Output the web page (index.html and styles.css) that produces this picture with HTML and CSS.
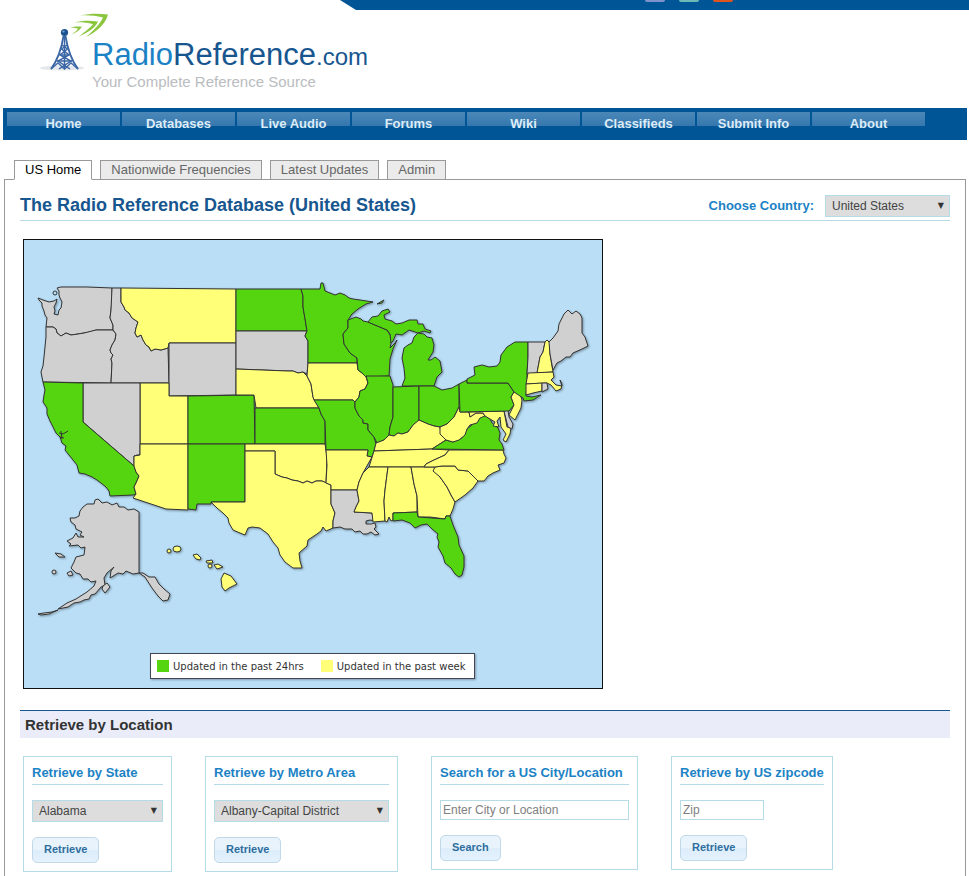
FILE: index.html
```
<!DOCTYPE html>
<html lang="en">
<head>
    <meta charset="UTF-8">
    <meta name="viewport" content="width=device-width, initial-scale=1.0">
    <title>The Radio Reference Database (United States)</title>
    <link rel="stylesheet" href="styles.css">
</head>
<body>
    <header>
        <div class="topbar">
            <span class="social facebook"></span>
            <span class="social twitter"></span>
            <span class="social rss"></span>
        </div>
        <a class="logo" href="#">
            <svg class="tower" width="70" height="60" viewBox="40 12 70 60" aria-hidden="true">
                <ellipse cx="62" cy="68" rx="22" ry="2.500" fill="#d9dde2" opacity=".7"/>
                <g fill="none" stroke="#3b66a5" stroke-width="1.800">
                    <path d="M63.500 36C61 52 57 61 51 69M65.500 36C68 52 72 61 78 69"/>
                    <path d="M64.500 36V69M62 45L67.500 49L60 55L71 61L59 69M67 45L61.500 49L69 55L58 61L70 69" stroke-width="1.500"/>
                    <path d="M60 55H69M57 61H72M51 69L58 63L64.500 69L71 63L78 69" stroke-width="1.400"/>
                </g>
                <circle cx="64.500" cy="32.500" r="3.600" fill="#1d5291"/>
                <circle cx="63.500" cy="31.500" r="1.100" fill="#78a4d0"/>
                <g fill="#8cc63f">
                    <path d="M80 15.500C90 13.500 99 13.500 108 14.500C106 23 98 31 86 37C94 30 100 24 103 17.500C95 15.500 88 15 80 15.500Z"/>
                    <path d="M74 22.500C82 20.500 90 20.500 98 21.500C96 27 89 32 79 36.500C86 31 91 27 93 24.300C87 22.500 80 22 74 22.500Z"/>
                    <path d="M70 27.800C75 26.300 78 26.300 82 26.800C80 30 76 33 71.500 34.500C75 32 77.500 30 78 28.700C75 27.800 73 27.600 70 27.800Z"/>
                </g>
            </svg>
            <span class="logo-text">
                <span class="brand"><span class="radio">Radio</span><span class="reference">Reference</span><span class="com">.com</span></span>
                <span class="tagline">Your Complete Reference Source</span>
            </span>
        </a>
    </header>

    <nav class="menu">
        <a href="#">Home</a>
        <a href="#">Databases</a>
        <a href="#">Live Audio</a>
        <a href="#">Forums</a>
        <a href="#">Wiki</a>
        <a href="#">Classifieds</a>
        <a href="#">Submit Info</a>
        <a href="#">About</a>
    </nav>

    <div class="tabs">
        <a class="tab active" href="#">US Home</a>
        <a class="tab" href="#">Nationwide Frequencies</a>
        <a class="tab" href="#">Latest Updates</a>
        <a class="tab" href="#">Admin</a>
    </div>

    <main class="panel">
        <div class="title-row">
            <h1>The Radio Reference Database (United States)</h1>
            <form class="country">
                <label for="country">Choose Country:</label>
                <span class="select country-select">
                    <select id="country"><option>United States</option></select>
                </span>
            </form>
        </div>

        <div class="map">
            <svg viewBox="24 240 578 448" role="img" aria-label="Map of US states by last update">
                <g class="states">
                    <!-- West -->
                    <path class="none" d="M57 288L61 287L87 287L112 288L112 300L111 310L110 318L113 325L113 330L96 330L90 332L84 333L78 334L71 335L66 333L61 336L57 333L56 329L53 327L46 327L47 318L45 315L44 311L42 306L42 303L39 300L38 298L43 300L49 302L54 301L57 299L56 303L54 307L55 311L54 314L58 315L59 310L61 308L62 302L60 298L59 295L59 291Z"/>
                    <path class="none" d="M46 327L53 327L56 329L57 333L61 336L66 333L71 335L78 334L84 333L96 330L113 330L116 334L115 340L112 345L110 350L111 353L113 355L111 359L112 363L111 383L43 382L41 372L43 366L44 357L46 337Z"/>
                    <path class="none" d="M112 288L121 288L121 302L124 307L125 310L129 313L132 318L138 322L136 328L135 333L137 337L141 335L143 340L146 345L149 347L151 351L155 349L161 350L168 348L169 383L111 383L112 363L111 359L113 355L111 353L110 350L112 345L115 340L116 334L113 330L113 325L110 318L111 310Z"/>
                    <path class="week" d="M121 288L236 289L236 343L169 343L168 348L161 350L155 349L151 351L149 347L146 345L143 340L141 335L137 337L135 333L136 328L138 322L132 318L129 313L125 310L124 307L121 302Z"/>
                    <path class="none" d="M169 343L236 343L236 395L169 396Z"/>
                    <path class="week" d="M140 383L169 383L169 396L188 396L188 444L140 444Z"/>
                    <path class="none" d="M83 383L140 383L140 455L137 455L134 456L134 466L83 422Z"/>
                    <path class="day" d="M43 382L83 383L83 422L134 466L136 472L139 476L136 483L134 487L136 494L133 495L110 496L109 491L106 487L101 483L97 480L92 477L85 474L79 473L77 465L73 460L69 455L65 450L66 446L62 443L60 437L56 433L53 427L50 421L47 414L47 408L43 402L44 395L45 390Z"/>
                    <path d="M59 433L63 434L68 431M61 431L62 439M60 437L64 438" fill="none"/>
                    <path class="week" d="M140 444L188 444L188 510L166 509L133 498L136 494L134 487L136 483L139 476L136 472L134 466L134 456L140 455Z"/>
                    <path class="day" d="M188 396L254 395L255 444L188 444Z"/>
                    <path class="day" d="M188 444L245 444L245 502L211 502L211 504L197 504L196 510L188 509Z"/>

                    <!-- Plains -->
                    <path class="day" d="M236 289L301 289L303 296L303 307L305 318L307 331L236 331Z"/>
                    <path class="none" d="M236 331L307 331L305 336L308 341L308 363L307 374L303 372L298 373L293 371L288 371L236 369Z"/>
                    <path class="week" d="M236 369L288 371L293 371L298 373L303 372L307 376L311 384L313 397L319 408L256 408L254 395L236 395Z"/>
                    <path class="day" d="M255 408L319 408L321 414L325 421L325 444L255 444Z"/>
                    <path class="week" d="M245 444L325 444L327 457L326 483L322 481L316 481L312 483L307 481L303 483L298 481L292 480L287 478L282 477L275 474L275 451L245 451Z"/>
                    <path class="week" d="M245 451L275 451L275 474L282 477L287 478L292 480L298 481L303 483L307 481L312 483L316 481L322 481L331 485L331 504L335 513L333 521L333 528L326 531L323 527L321 531L317 534L308 540L307 546L299 553L300 561L302 568L293 568L285 562L280 555L278 548L273 542L268 534L264 531L260 528L252 527L248 528L245 535L240 533L233 530L229 523L228 518L223 513L217 508L211 502L245 502Z"/>
                    <path class="day" d="M301 289L320 289L321 283L323 283L325 291L330 293L335 295L340 293L345 295L349 298L353 299L360 300L373 302L366 304L358 309L352 314L348 320L348 328L343 334L344 344L350 353L357 358L357 363L308 363L308 341L305 336L307 331L303 307L303 296Z"/>
                    <path class="week" d="M308 363L357 363L358 370L362 373L366 377L368 383L365 389L360 391L359 397L355 402L353 400L314 400L313 397L311 384L307 376Z"/>
                    <path class="day" d="M314 400L353 400L355 402L355 408L359 416L363 420L363 423L368 424L368 430L374 437L376 444L374 451L372 457L367 456L368 450L326 450L325 421L321 414L319 408Z"/>
                    <path class="week" d="M326 450L368 450L367 456L372 457L368 464L363 473L359 482L357 490L331 490L331 485L326 483L327 465Z"/>
                    <path class="none" d="M331 490L357 490L359 501L356 507L354 512L372 513L373 518L375 521L370 520L366 521L366 524L371 524L375 523L376 527L374 529L379 534L375 535L371 532L367 534L363 534L360 531L355 532L352 529L345 529L340 527L333 528L333 521L335 513L331 504Z"/>

                    <!-- Great Lakes -->
                    <path class="day" d="M348 320L356 317L361 319L363 321L368 322L375 325L387 330L392 338L390 348L395 343L397 340L393 349L390 359L389 376L366 377L362 373L358 370L357 358L350 353L344 344L343 334L348 328Z"/>
                    <path class="day" d="M368 322L372 317L378 316L382 311L388 309L390 312L384 315L385 319L392 321L396 324L402 323L409 320L417 320L418 324L423 324L425 329L431 331L430 333L424 331L418 333L409 330L402 335L396 334L393 341L391 343L390 334L387 330L375 325Z"/>
                    <path class="day" d="M377 304L384 300L382 303Z"/>
                    <path class="day" d="M402 386L405 378L404 368L402 358L404 348L408 345L412 343L414 337L418 333L424 334L427 337L432 338L434 345L433 352L428 360L431 360L435 357L440 361L442 372L437 377L434 386Z"/>
                    <path class="day" d="M366 376L390 376L393 385L393 417L390 427L389 435L384 440L377 443L374 437L368 430L368 424L363 423L363 420L359 416L355 408L355 402L359 397L360 391L365 389L368 383Z"/>
                    <path class="day" d="M393 387L419 386L419 421L413 425L408 432L402 434L398 433L394 436L389 435L390 427L393 417Z"/>
                    <path class="day" d="M419 386L434 386L442 390L452 388L459 384L459 407L454 417L447 424L440 427L434 426L428 424L419 420Z"/>

                    <!-- South -->
                    <path class="week" d="M374 451L376 443L384 440L389 435L394 436L398 433L402 434L408 432L413 425L419 420L428 424L434 426L440 427L441 434L446 440L432 449Z"/>
                    <path class="week" d="M374 451L432 449L449 450L445 455L434 460L426 464L424 467L369 467Z"/>
                    <path class="week" d="M369 467L388 467L385 490L384 501L385 521L373 522L372 513L354 512L356 507L359 501L357 490L359 482L363 473Z"/>
                    <path class="week" d="M388 467L411 467L414 484L417 496L417 512L393 513L393 520L391 521L389 517L387 522L385 521L384 501L385 490Z"/>
                    <path class="week" d="M411 467L435 467L434 471L440 477L447 487L451 495L455 502L453 509L450 516L446 516L445 519L430 517L418 517L417 496L414 484Z"/>
                    <path class="day" d="M393 513L417 512L418 517L445 519L446 516L450 516L453 525L458 537L459 545L464 556L464 567L462 575L459 577L455 574L451 568L445 563L443 556L438 547L439 542L437 537L438 534L432 529L427 524L421 525L415 528L410 523L402 520L393 521Z"/>
                    <path class="week" d="M435 467L442 466L455 466L458 470L468 471L478 481L473 488L465 495L455 502L451 495L447 487L440 477L433 471Z"/>
                    <path class="week" d="M449 450L503 450L504 454L506 458L504 463L498 465L500 470L493 473L488 476L484 481L478 481L468 471L458 470L455 466L442 466L435 467L424 467L426 464L434 460L445 455Z"/>
                    <path class="day" d="M432 449L446 440L453 442L462 438L467 429L473 424L478 419L483 414L490 419L492 423L498 428L500 433L499 440L502 444L504 450Z"/>
                    <path class="week" d="M459 407L460 412L469 412L470 417L476 413L483 413L485 416L480 418L477 423L470 425L467 429L465 435L459 440L453 442L446 440L440 434L440 427L447 424L454 417Z"/>

                    <!-- Northeast -->
                    <path class="week" d="M469 412L504 411L507 427L511 428L510 434L506 442L503 440L506 434L501 427L500 417L497 421L499 427L493 426L495 422L490 419L485 416L483 413L476 413L470 417Z"/>
                    <path class="none" d="M504 411L508 410L509 417L513 424L512 429L508 427Z"/>
                    <path class="day" d="M459 384L467 380L467 383L508 383L514 392L511 397L514 405L509 411L460 412Z"/>
                    <path class="week" d="M514 392L520 394L522 400L521 408L518 414L515 420L509 415L514 405L511 397Z"/>
                    <path class="day" d="M467 383L467 379L475 375L474 367L482 365L489 367L497 366L500 362L501 355L507 347L515 342L528 342L528 357L527 373L527 383L526 396L532 397L541 395L533 400L524 401L523 398L514 392L508 383Z"/>
                    <path class="none" d="M528 342L545 342L543 352L540 357L537 373L527 374L528 357Z"/>
                    <path class="week" d="M545 342L547 340L550 343L550 354L552 366L553 372L537 373L540 357L543 352Z"/>
                    <path class="none" d="M549 342L553 338L558 331L559 324L564 314L568 310L572 314L576 311L580 314L582 318L582 333L585 337L588 346L582 349L573 353L570 357L566 357L561 361L557 363L553 370L550 354Z"/>
                    <path class="week" d="M528 373L553 372L554 377L551 380L556 385L562 386L560 380L562 384L561 389L556 391L551 385L547 383L526 384Z"/>
                    <path class="week" d="M526 384L542 383L542 391L533 393L526 395Z"/>
                    <path class="none" d="M542 383L547 383L548 389L542 392Z"/>

                    <!-- Alaska -->
                    <path class="none" d="M139 512L134 509L128 510L124 507L119 507L117 503L112 505L107 502L102 503L98 499L95 500L94 504L87 504L83 507L80 511L79 516L75 518L70 518L71 522L75 525L76 529L82 532L80 535L84 537L78 537L76 533L73 538L67 541L71 544L69 546L78 545L81 548L85 547L84 555L76 557L74 562L71 568L76 573L80 574L83 579L88 579L91 582L96 581L94 586L87 592L76 599L67 603L58 609L68 607L74 603L80 602L84 600L89 599L91 595L95 594L101 587L105 585L104 578L107 573L114 567L111 571L110 578L118 573L123 574L126 571L133 574L139 573L143 573L149 577L155 577L159 584L164 589L170 594L168 600L163 601L158 596L152 588L145 577L139 573Z"/>
                    <path class="none" d="M38 614L44 613L52 612L58 610L49 614L41 615Z"/>
                    <path class="none" d="M103 586L107 583L110 587L105 593L102 589Z"/>
                    <path class="none" d="M55 553L61 554L65 557L59 557Z"/>
                    <path class="none" d="M67 573L71 571L73 575L69 576Z"/>
                    <circle class="none" cx="54" cy="572" r="2"/>

                    <!-- Hawaii -->
                    <circle class="week" cx="169" cy="551" r="2"/>
                    <ellipse class="week" cx="177" cy="549" rx="4" ry="3"/>
                    <path class="week" d="M193 555L197 554L201 558L200 560L196 559Z"/>
                    <path class="week" d="M206 561L212 560L213 563L207 563Z"/>
                    <circle class="week" cx="210" cy="566" r="2"/>
                    <path class="week" d="M214 565L218 564L223 567L217 569Z"/>
                    <path class="week" d="M224 573L231 576L234 580L237 584L229 588L225 591L222 587L221 579Z"/>
                </g>
                <circle cx="55" cy="293" r="2" fill="none" stroke="#333"/>
            </svg>
            <div class="legend">
                <span class="swatch day"></span><span>Updated in the past 24hrs</span>
                <span class="swatch week"></span><span>Updated in the past week</span>
            </div>
        </div>

        <h2>Retrieve by Location</h2>

        <div class="boxes">
            <form class="box state-box">
                <h3><label for="state">Retrieve by State</label></h3>
                <span class="select">
                    <select id="state"><option>Alabama</option></select>
                </span>
                <button type="button" class="button">Retrieve</button>
            </form>
            <form class="box metro-box">
                <h3><label for="metro">Retrieve by Metro Area</label></h3>
                <span class="select">
                    <select id="metro"><option>Albany-Capital District</option></select>
                </span>
                <button type="button" class="button">Retrieve</button>
            </form>
            <form class="box city-box">
                <h3><label for="city">Search for a US City/Location</label></h3>
                <input type="text" id="city" placeholder="Enter City or Location">
                <button type="button" class="button">Search</button>
            </form>
            <form class="box zip-box">
                <h3><label for="zip">Retrieve by US zipcode</label></h3>
                <input type="text" id="zip" placeholder="Zip">
                <button type="button" class="button">Retrieve</button>
            </form>
        </div>
    </main>
</body>
</html>
```

FILE: styles.css
```
* {
    box-sizing: border-box;
}
body {
    margin: 0;
    font-family: "Liberation Sans", Arial, sans-serif;
    font-size: 13px;
    color: #333;
    background: #fff;
}
a {
    text-decoration: none;
}
h1, h2, h3 {
    margin: 0;
}

/* Header */
header {
    height: 108px;
}
.topbar {
    display: flex;
    gap: 14px;
    height: 10px;
    margin-left: 340px;
    padding-left: 305px;
    background: #005596;
    clip-path: polygon(0 0, 100% 0, 100% 100%, 16px 100%);
}
.social {
    width: 20px;
    height: 2px;
    border-radius: 0 0 3px 3px;
}
.facebook {
    background: #7d93cc;
}
.twitter {
    background: #6cb9b5;
}
.rss {
    background: #e0541e;
}
.logo {
    display: inline-flex;
    padding: 2px 0 0 40px;
}
.logo-text {
    display: flex;
    flex-direction: column;
    margin-left: -18px;
    padding-top: 26px;
}
.brand {
    font-size: 31px;
    line-height: 34px;
    color: #17568f;
}
.radio {
    color: #1b82c5;
}
.com {
    font-size: 24px;
}
.tagline {
    font-size: 15px;
    line-height: 16px;
    color: #b9bcc0;
}

/* Main menu */
.menu {
    display: flex;
    gap: 2px;
    height: 32px;
    margin: 0 2px 0 3px;
    padding: 4px;
    background: #005596;
}
.menu a {
    width: 113px;
    line-height: 24px;
    text-align: center;
    font-weight: bold;
    color: #dcecf8;
    background: linear-gradient(#4b88b8, #3577ae 14px, #005596 14px);
}

/* Tabs */
.tabs {
    display: flex;
    gap: 8px;
    margin: 20px 14px -1px;
}
.tab {
    position: relative;
    height: 20px;
    padding: 0 10px;
    line-height: 18px;
    color: #666;
    background: #ebebeb;
    border: 1px solid #999;
}
.tab.active {
    color: #000;
    background: #fff;
    border-bottom-color: #fff;
}
.panel {
    margin: 0 3px 0 4px;
    padding: 15px 15px 4px;
    border: 1px solid #999;
    border-bottom: 0;
}
.title-row {
    display: flex;
    justify-content: space-between;
    height: 26px;
    border-bottom: 1px solid #b5dbe6;
}
h1 {
    font-size: 18px;
    line-height: 20px;
    color: #17568f;
}
.country {
    display: flex;
    gap: 11px;
    font-weight: bold;
    line-height: 22px;
    color: #1b82c5;
}

/* Form controls */
.select {
    display: block;
    position: relative;
}
.country-select {
    width: 125px;
}
.select::after {
    content: "▼";
    position: absolute;
    top: 0;
    right: 6px;
    font: 8px/22px "DejaVu Sans", sans-serif;
    color: #333;
    pointer-events: none;
}
select {
    display: block;
    appearance: none;
    width: 100%;
    height: 22px;
    padding: 0 6px;
    font: 12px "Liberation Sans", Arial, sans-serif;
    color: #444;
    background: #ddd;
    border: 1px solid #b5dbe6;
    border-radius: 0;
}
input {
    display: block;
    width: 100%;
    height: 20px;
    padding: 0 2px;
    font: 12px "Liberation Sans", Arial, sans-serif;
    border: 1px solid #b5dbe6;
}
input::placeholder {
    color: #808080;
}
.button {
    display: block;
    height: 26px;
    margin-top: 15px;
    padding: 0 11px 2px;
    font: bold 11px "Liberation Sans", Arial, sans-serif;
    color: #2e6e9e;
    background: linear-gradient(#e8f3fc 50%, #dcecfa 50%, #e4f2fd);
    border: 1px solid #c0d8e8;
    border-radius: 5px;
    cursor: pointer;
}

/* Map */
.map {
    position: relative;
    max-width: 580px;
    margin: 18px 0 21px 3px;
    background: #b9def6;
    border: 1px solid #111;
}
.map svg {
    display: block;
    width: 100%;
}
.states {
    stroke: #333;
    stroke-linejoin: round;
    filter: drop-shadow(1px 1px 1px rgba(0, 0, 0, 0.35));
}
.none {
    fill: #d0d0d0;
}
.day {
    fill: #54d510;
    background: #54d510;
}
.week {
    fill: #ffff78;
    background: #ffff78;
}
.legend {
    position: absolute;
    left: 126px;
    bottom: 9px;
    display: flex;
    align-items: center;
    height: 26px;
    padding: 0 9px 0 6px;
    font: 10px "DejaVu Sans", sans-serif;
    color: #333;
    white-space: nowrap;
    background: #fff;
    border: 1px solid #445;
    box-shadow: 1px 1px 2px rgba(0, 0, 0, 0.3);
}
.swatch {
    width: 12px;
    height: 12px;
    margin-right: 4px;
}
.swatch.week {
    margin-left: 17px;
}

/* Retrieve by Location */
h2 {
    height: 28px;
    padding-left: 5px;
    font-size: 15px;
    line-height: 28px;
    background: #eaedf9;
    border-top: 1px solid #17568f;
}
.boxes {
    display: flex;
    align-items: flex-start;
    gap: 33px;
    margin: 18px 3px 0;
}
.box {
    padding: 8px;
    border: 1px solid #b5dbe6;
}
.state-box {
    width: 149px;
}
.metro-box {
    width: 193px;
}
.city-box {
    width: 207px;
}
.zip-box {
    width: 162px;
}
#zip {
    width: 84px;
}
h3 {
    height: 20px;
    margin-bottom: 15px;
    font-size: 13px;
    line-height: 16px;
    white-space: nowrap;
    color: #1b82c5;
    border-bottom: 1px solid #b5dbe6;
}
```
